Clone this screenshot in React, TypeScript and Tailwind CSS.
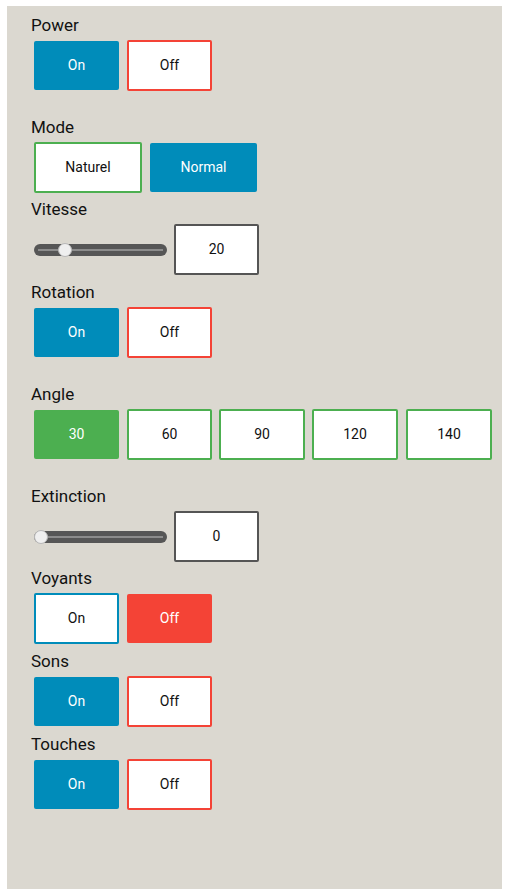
import React from "react";

type Btn = { label: string; kind: "fill" | "outline"; color: "blue" | "red" | "green" };

const fillCls: Record<string, string> = {
  blue: "bg-[#008cba] text-white",
  red: "bg-[#f44336] text-white",
  green: "bg-[#4caf50] text-white",
};
const outlineCls: Record<string, string> = {
  blue: "border-[#008cba]",
  red: "border-[#f44336]",
  green: "border-[#4caf50]",
};

function Button({ b, w }: { b: Btn; w: string }) {
  if (b.kind === "fill") {
    return (
      <div className={`${w} h-[51px] flex items-center`}>
        <div className={`w-full h-[49px] rounded-[2px] flex items-center justify-center text-[14px] ${fillCls[b.color]}`}>
          {b.label}
        </div>
      </div>
    );
  }
  return (
    <div
      className={`${w} h-[51px] rounded-[2px] border-2 bg-white flex items-center justify-center text-[14px] text-[#111] ${outlineCls[b.color]}`}
    >
      {b.label}
    </div>
  );
}

function Label({ children }: { children: React.ReactNode }) {
  return <div className="-ml-[3px] h-[20px] leading-[20px] mb-[5px] text-[17px] text-[#111]">{children}</div>;
}

function Slider({ value }: { value: number }) {
  const left = 7 + (value / 100) * (133 - 14);
  return (
    <div className="relative w-[133px] h-[14px] flex items-center">
      <div className="w-full h-[12px] rounded-full bg-[#565656] flex items-center">
        <div className="mx-[4px] w-full h-[2px] bg-[#8c8c8c]" />
      </div>
      <div
        className="absolute top-0 w-[14px] h-[14px] rounded-full bg-[#efefef] border border-[#b8b8b8]"
        style={{ left: left - 7 }}
      />
    </div>
  );
}

function SliderRow({ value }: { value: number }) {
  return (
    <div className="flex items-center gap-[7px] h-[51px]">
      <Slider value={value} />
      <div className="w-[85px] h-[51px] rounded-[2px] border-2 border-[#555] bg-white flex items-center justify-center text-[14px] text-[#111]">
        {value}
      </div>
    </div>
  );
}

function OnOff({ on, off }: { on: Btn; off: Btn }) {
  return (
    <div className="flex gap-[8px]">
      <Button b={on} w="w-[85px]" />
      <Button b={off} w="w-[85px]" />
    </div>
  );
}

const onBlue: Btn = { label: "On", kind: "fill", color: "blue" };
const offRed: Btn = { label: "Off", kind: "outline", color: "red" };

export default function App() {
  return (
    <div className="w-[508px] h-[896px] bg-white pt-[6px] pl-[7px]" style={{ fontFamily: "Roboto, 'Liberation Sans', sans-serif" }}>
      <div className="w-[495px] bg-[#dbd8d0] pt-[9px] pl-[27px] pb-[79px]">
        <section>
          <Label>Power</Label>
          <OnOff on={onBlue} off={offRed} />
        </section>
        <section className="mt-[26px]">
          <Label>Mode</Label>
          <div className="flex gap-[8px]">
            <Button b={{ label: "Naturel", kind: "outline", color: "green" }} w="w-[108px]" />
            <Button b={{ label: "Normal", kind: "fill", color: "blue" }} w="w-[107px]" />
          </div>
        </section>
        <section className="mt-[6px]">
          <Label>Vitesse</Label>
          <SliderRow value={20} />
        </section>
        <section className="mt-[7px]">
          <Label>Rotation</Label>
          <OnOff on={onBlue} off={offRed} />
        </section>
        <section className="mt-[26px]">
          <Label>Angle</Label>
          <div className="flex">
            <Button b={{ label: "30", kind: "fill", color: "green" }} w="w-[85px]" />
            <div className="ml-[8px]">
              <Button b={{ label: "60", kind: "outline", color: "green" }} w="w-[85px]" />
            </div>
            <div className="ml-[7px]">
              <Button b={{ label: "90", kind: "outline", color: "green" }} w="w-[86px]" />
            </div>
            <div className="ml-[7px]">
              <Button b={{ label: "120", kind: "outline", color: "green" }} w="w-[86px]" />
            </div>
            <div className="ml-[8px]">
              <Button b={{ label: "140", kind: "outline", color: "green" }} w="w-[86px]" />
            </div>
          </div>
        </section>
        <section className="mt-[26px]">
          <Label>Extinction</Label>
          <SliderRow value={0} />
        </section>
        <section className="mt-[6px]">
          <Label>Voyants</Label>
          <OnOff
            on={{ label: "On", kind: "outline", color: "blue" }}
            off={{ label: "Off", kind: "fill", color: "red" }}
          />
        </section>
        <section className="mt-[7px]">
          <Label>Sons</Label>
          <OnOff on={onBlue} off={offRed} />
        </section>
        <section className="mt-[7px]">
          <Label>Touches</Label>
          <OnOff on={onBlue} off={offRed} />
        </section>
      </div>
    </div>
  );
}
